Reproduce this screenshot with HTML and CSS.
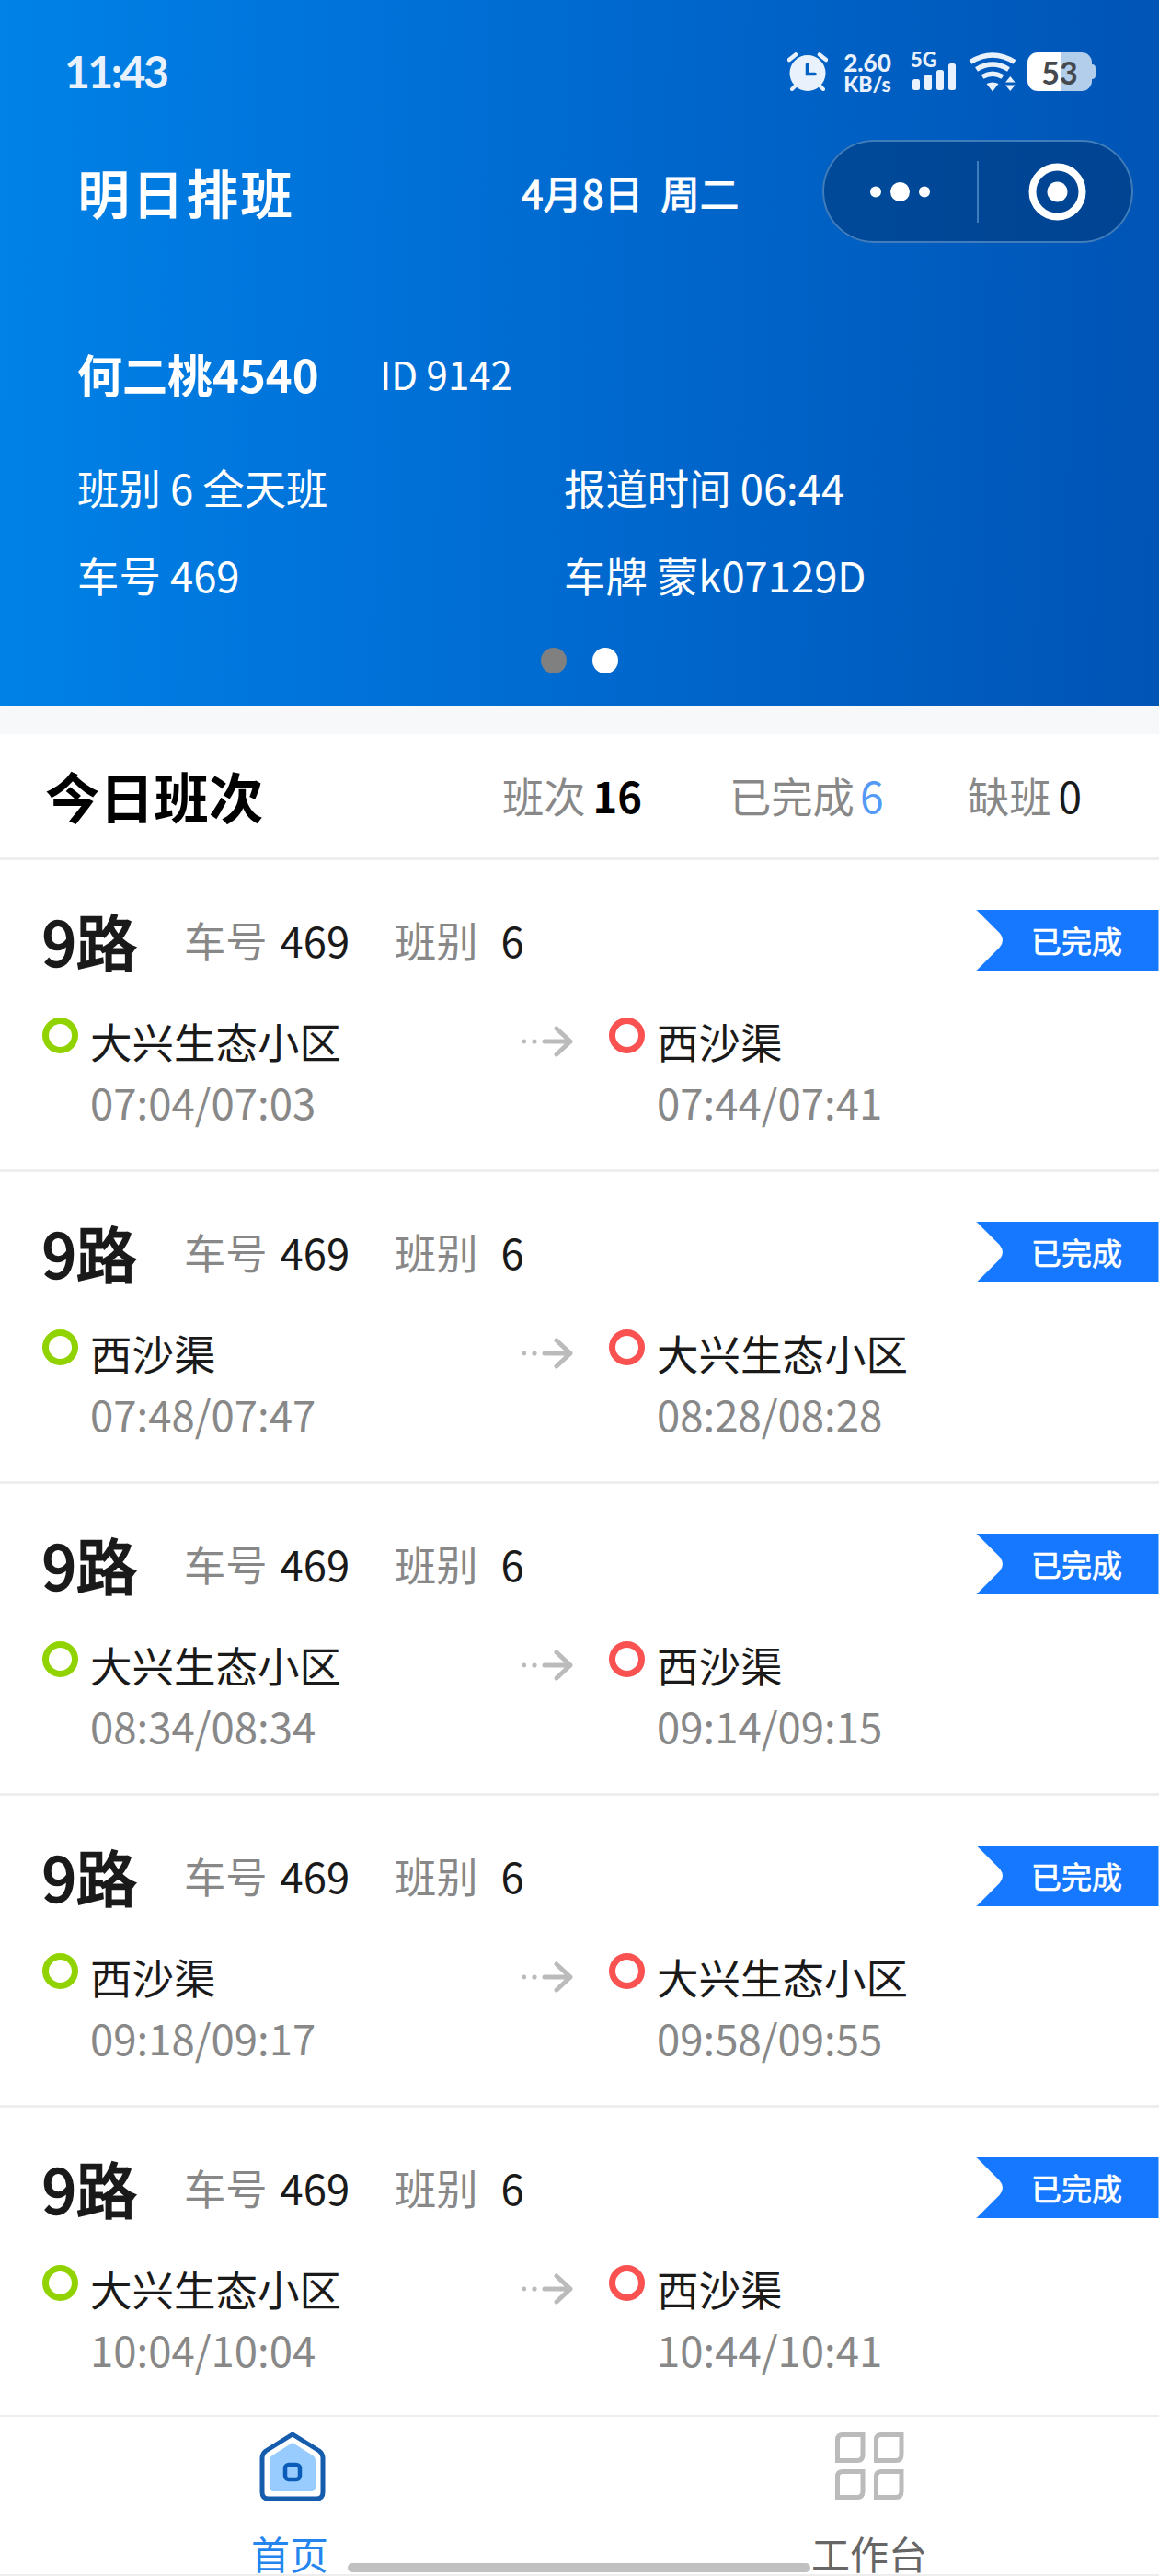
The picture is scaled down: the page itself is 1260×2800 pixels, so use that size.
FILE: index.html
```html
<!DOCTYPE html>
<html lang="zh-CN">
<head>
    <meta charset="UTF-8">
    <meta name="viewport" content="width=device-width, initial-scale=1.0">
    <title>今日班次</title>
    <link rel="stylesheet" href="styles.css">
</head>
<body>
    <!-- shared icons -->
    <svg class="sprite" width="0" height="0">
        <symbol id="arrow" viewBox="0 0 56 36">
            <circle cx="2.8" cy="18" r="2.4" fill="#bbb"/>
            <circle cx="14" cy="18" r="2.6" fill="#bbb"/>
            <path d="M25 18H53M38 4L53 18L38 32" fill="none" stroke="#bbb" stroke-width="5" stroke-linecap="round" stroke-linejoin="round"/>
        </symbol>
        <symbol id="flag" viewBox="0 0 198 66">
            <path d="M0 0H198V66H0L25 41Q32 33 25 25Z" fill="#1677ff"/>
        </symbol>
    </svg>

    <div class="page">
    <div class="hero">
        <div class="status">
            <span class="clock">11:43</span>
            <svg class="alarm" width="44" height="42" viewBox="0 0 44 42">
                <circle cx="22" cy="22.500" r="19.500" fill="#e9f2fc"/>
                <path d="M2 8L9 2.500M42 8L35 2.500" stroke="#e9f2fc" stroke-width="4.500" stroke-linecap="round"/>
                <path d="M5 40L10 35M39 40L34 35" stroke="#e9f2fc" stroke-width="4" stroke-linecap="round"/>
                <path d="M21.500 13V23.500H30" fill="none" stroke="#0061c4" stroke-width="3.500" stroke-linecap="round"/>
            </svg>
            <div class="speed"><b>2.60</b><b class="unit">KB/s</b></div>
            <div class="signal">
                <b>5G</b>
                <svg width="48" height="30" viewBox="0 0 48 30" fill="#e9f2fc">
                    <rect x="0" y="17" width="8" height="12" rx="2.500"/>
                    <rect x="13" y="12" width="8" height="17" rx="2.500"/>
                    <rect x="26" y="7" width="8" height="22" rx="2.500"/>
                    <rect x="39" y="0" width="8" height="29" rx="2.500"/>
                </svg>
            </div>
            <svg class="wifi" width="52" height="43" viewBox="0 0 52 43" fill="none" stroke="#e9f2fc" stroke-width="5.500">
                <path d="M2 10.500Q26 -4.500 50 10.500"/>
                <path d="M8.500 18.500Q26 7.500 43.500 18.500"/>
                <path d="M15 26.500Q26 20 37 26.500"/>
                <path d="M19.500 34Q26 31 32.500 34L26 42.500Z" fill="#e9f2fc" stroke="none"/>
                <path d="M40 32.500L45.300 26L50.600 32.500ZM40 35.500L45.300 42L50.600 35.500Z" fill="#e9f2fc" stroke="none"/>
            </svg>
            <div class="battery"><span>53</span></div>
        </div>

        <div class="nav">
            <h1>明日排班</h1>
            <span class="date">4月8日&nbsp; 周二</span>
            <div class="capsule">
                <svg width="338" height="112" viewBox="0 0 338 112" fill="#fff">
                    <circle cx="58" cy="56.500" r="6"/>
                    <circle cx="84.500" cy="56.500" r="10.500"/>
                    <circle cx="111" cy="56.500" r="6"/>
                    <path d="M169 23V90" stroke="#3f7dbd" stroke-width="2"/>
                    <circle cx="255.500" cy="56.500" r="27" fill="none" stroke="#fff" stroke-width="8"/>
                    <circle cx="255.500" cy="56.500" r="11"/>
                </svg>
            </div>
        </div>

        <div class="driver">
            <div class="who"><span class="name">何二桃4540</span><span class="uid">ID 9142</span></div>
            <div class="info">
                <p>班别 6 全天班</p>
                <p>报道时间 06:44</p>
                <p>车号 469</p>
                <p>车牌 蒙k07129D</p>
            </div>
        </div>
        <div class="dots"><i></i><i class="on"></i></div>
    </div>

    <div class="summary">
        <h2>今日班次</h2>
        <p class="total">班次<b>16</b></p>
        <p class="done">已完成<span>6</span></p>
        <p class="miss">缺班<span>0</span></p>
    </div>

    <div class="list">
        <div class="trip">
            <div class="top">
                <h3>9路</h3>
                <p class="bus">车号<span>469</span></p>
                <p class="shift">班别<span>6</span></p>
                <div class="flag"><svg><use href="#flag"/></svg><span>已完成</span></div>
            </div>
            <div class="route">
                <div class="stop"><i class="ring"></i><div><p>大兴生态小区</p><p class="time">07:04/07:03</p></div></div>
                <svg class="arrow"><use href="#arrow"/></svg>
                <div class="stop"><i class="ring end"></i><div><p>西沙渠</p><p class="time">07:44/07:41</p></div></div>
            </div>
        </div>

        <div class="trip">
            <div class="top">
                <h3>9路</h3>
                <p class="bus">车号<span>469</span></p>
                <p class="shift">班别<span>6</span></p>
                <div class="flag"><svg><use href="#flag"/></svg><span>已完成</span></div>
            </div>
            <div class="route">
                <div class="stop"><i class="ring"></i><div><p>西沙渠</p><p class="time">07:48/07:47</p></div></div>
                <svg class="arrow"><use href="#arrow"/></svg>
                <div class="stop"><i class="ring end"></i><div><p>大兴生态小区</p><p class="time">08:28/08:28</p></div></div>
            </div>
        </div>

        <div class="trip">
            <div class="top">
                <h3>9路</h3>
                <p class="bus">车号<span>469</span></p>
                <p class="shift">班别<span>6</span></p>
                <div class="flag"><svg><use href="#flag"/></svg><span>已完成</span></div>
            </div>
            <div class="route">
                <div class="stop"><i class="ring"></i><div><p>大兴生态小区</p><p class="time">08:34/08:34</p></div></div>
                <svg class="arrow"><use href="#arrow"/></svg>
                <div class="stop"><i class="ring end"></i><div><p>西沙渠</p><p class="time">09:14/09:15</p></div></div>
            </div>
        </div>

        <div class="trip">
            <div class="top">
                <h3>9路</h3>
                <p class="bus">车号<span>469</span></p>
                <p class="shift">班别<span>6</span></p>
                <div class="flag"><svg><use href="#flag"/></svg><span>已完成</span></div>
            </div>
            <div class="route">
                <div class="stop"><i class="ring"></i><div><p>西沙渠</p><p class="time">09:18/09:17</p></div></div>
                <svg class="arrow"><use href="#arrow"/></svg>
                <div class="stop"><i class="ring end"></i><div><p>大兴生态小区</p><p class="time">09:58/09:55</p></div></div>
            </div>
        </div>

        <div class="trip">
            <div class="top">
                <h3>9路</h3>
                <p class="bus">车号<span>469</span></p>
                <p class="shift">班别<span>6</span></p>
                <div class="flag"><svg><use href="#flag"/></svg><span>已完成</span></div>
            </div>
            <div class="route">
                <div class="stop"><i class="ring"></i><div><p>大兴生态小区</p><p class="time">10:04/10:04</p></div></div>
                <svg class="arrow"><use href="#arrow"/></svg>
                <div class="stop"><i class="ring end"></i><div><p>西沙渠</p><p class="time">10:44/10:41</p></div></div>
            </div>
        </div>
    </div>

    <div class="tabbar">
        <div class="tab active">
            <svg width="76" height="78" viewBox="0 0 76 78">
                <path d="M38 3L67 21Q71 24 71 29V66Q71 73 64 73H12Q5 73 5 66V29Q5 24 9 21Z" fill="#fff" stroke="#155cad" stroke-width="5" stroke-linejoin="round"/>
                <path d="M38 12L60 26Q63 28 63 32V60Q63 65 58 65H18Q13 65 13 60V32Q13 28 16 26Z" fill="#98ccff"/>
                <rect x="30" y="36" width="16" height="16" rx="4" fill="#98ccff" stroke="#0b5cb8" stroke-width="4.500"/>
            </svg>
            <span>首页</span>
        </div>
        <div class="tab">
            <svg width="76" height="78" viewBox="0 0 76 78" fill="none" stroke="#bbb" stroke-width="5">
                <path d="M3.500 31.500V9Q3.500 3.500 9 3.500H31V25Q31 31.500 25 31.500Z"/>
                <path d="M45.500 31.500V9Q45.500 3.500 51 3.500H73V25Q73 31.500 67 31.500Z"/>
                <path d="M3.500 71.500V49Q3.500 43.500 9 43.500H31V65Q31 71.500 25 71.500Z"/>
                <path d="M45.500 71.500V49Q45.500 43.500 51 43.500H73V65Q73 71.500 67 71.500Z"/>
            </svg>
            <span>工作台</span>
        </div>
        <div class="homebar"></div>
    </div>
    </div>
</body>
</html>
```
FILE: styles.css
```css
*{
margin: 0;
padding: 0;
box-sizing: border-box;
font-family: "Noto Sans CJK SC", sans-serif;
}

body{
    background-color: #fff;
    color: #1a1a1a;
}

.sprite{
    position: absolute;
}

.page{
    width: 1260px;
    height: 2800px;
    overflow: hidden;
    display: flex;
    flex-direction: column;
}

svg{
    display: block;
    flex: none;
}

/* blue header */
.hero{
    height: 767px;
    flex: none;
    color: #fff;
    background: linear-gradient(91deg, #0082e6 0%, #0075dc 25%, #0063c8 65%, #0054b5 100%);
}

.status{
    height: 152px;
    padding: 57px 70px 0 70px;
    display: flex;
    align-items: flex-start;
    color: #e9f2fc;
}

.clock, .speed b, .signal b, .battery span{
    font-family: Lato, sans-serif;
    font-weight: 700;
}

.clock{
    width: 786px;
    font-size: 48px;
    line-height: 42px;
    letter-spacing: -2.500px;
}

.speed{
    width: 64px;
    margin-left: 11px;
    margin-right: 1px;
    font-size: 26px;
    line-height: 22px;
    text-align: center;
}

.speed b{
    display: block;
    font-weight: 900;
}

.speed .unit{
    font-size: 23px;
    line-height: 24px;
}

.signal{
    position: relative;
    width: 49px;
    margin-left: 16px;
    padding-top: 12px;
}

.signal b{
    position: absolute;
    left: -2px;
    top: -4px;
    font-size: 22px;
    font-weight: 900;
    line-height: 23px;
}

.wifi{
    margin-left: 12px;
}

.battery{
    position: relative;
    width: 70px;
    height: 42px;
    margin-left: 12px;
    border-radius: 11px;
    background: linear-gradient(90deg, #fff 53%, #b2ceeb 53%);
    color: #45484d;
    font-size: 34px;
    line-height: 42px;
    text-align: center;
}

.battery::after{
    content: "";
    position: absolute;
    right: -4px;
    top: 13px;
    width: 4px;
    height: 16px;
    border-radius: 0 4px 4px 0;
    background: #b2ceeb;
}

.nav{
    display: flex;
    align-items: center;
    height: 112px;
    padding: 0 28px 0 85px;
}

.nav h1{
    width: 482px;
    font-size: 55.500px;
    font-weight: 400;
    letter-spacing: 3.500px;
    -webkit-text-stroke: 2px #fff;
}

.date{
    width: 327px;
    font-size: 42.500px;
    -webkit-text-stroke: 1px #fff;
}

.capsule{
    width: 338px;
    height: 112px;
    border-radius: 56px;
    background: rgba(0, 50, 110, 0.500);
    box-shadow: inset 0 0 0 2px #3f7dbd;
}

.driver{
    height: 437px;
    padding: 105px 84px 0;
}

.who{
    display: flex;
    align-items: center;
    height: 72px;
}

.name{
    width: 329px;
    font-size: 49px;
    font-weight: 700;
}

.uid{
    font-size: 42px;
}

.info{
    display: grid;
    grid-template-columns: 529px 1fr;
    grid-auto-rows: 95px;
    margin-top: 41px;
    font-size: 45.400px;
    line-height: 95px;
}

.dots{
    display: flex;
    justify-content: center;
    gap: 28px;
    padding-top: 3px;
}

.dots i{
    width: 28px;
    height: 28px;
    border-radius: 50%;
    background: #808080;
}

.dots .on{
    background: #fff;
}

/* today summary */
.summary{
    display: flex;
    align-items: center;
    flex: none;
    height: 168px;
    padding: 0 0 1px 49px;
    border-top: 31px solid #f7f8fa;
    border-bottom: 4px solid #eee;
    font-size: 45.300px;
    color: #888;
}

.summary h2{
    width: 497px;
    font-size: 59.300px;
    font-weight: 700;
    color: #000;
}

.summary span, .summary b{
    margin-left: 8px;
    font-size: 46px;
    color: #1a1a1a;
}

.summary b{
    font-size: 45.300px;
    color: #000;
}

.summary .done span{
    margin-left: 6px;
    color: #5399f5;
}

.total{
    width: 247px;
}

.done{
    width: 259px;
}

/* trip list */
.list{
    flex: 1;
    overflow: hidden;
}

.trip{
    height: 339px;
    padding-top: 53px;
    border-bottom: 3px solid #eee;
}

.top{
    display: flex;
    align-items: center;
    height: 66px;
    padding-left: 46px;
    font-size: 45.300px;
    color: #888;
}

.top h3{
    width: 154px;
    font-size: 66px;
    font-weight: 400;
    color: #1a1a1a;
    -webkit-text-stroke: 2.400px #1a1a1a;
}

.top p span{
    color: #1a1a1a;
}

.bus{
    width: 229px;
}

.bus span{
    margin-left: 14px;
}

.shift span{
    margin-left: 25px;
}

.flag{
    position: relative;
    width: 199px;
    height: 66px;
    margin: 2px 0 0 auto;
    padding-left: 60px;
    font-size: 33px;
    line-height: 66px;
    color: #fff;
    -webkit-text-stroke: 0.700px #fff;
}

.flag svg{
    position: absolute;
    left: 0;
    top: 0;
    width: 199px;
    height: 66px;
}

.flag span{
    position: relative;
}

.route{
    display: flex;
    padding: 52px 0 0 46px;
}

.stop{
    display: flex;
    width: 521px;
    font-size: 45.500px;
    line-height: 66px;
}

.stop div{
    margin: -8px 0 0 13px;
}

.ring{
    width: 39px;
    height: 39px;
    border: 7px solid #91d300;
    border-radius: 50%;
}

.ring.end{
    border-color: #fa5151;
}

.time{
    color: #888;
}

.arrow{
    width: 56px;
    height: 36px;
    margin: 8px 39px 0 0;
}

/* bottom tabs */
.tabbar{
    position: relative;
    display: flex;
    flex: none;
    height: 175px;
    border-top: 2px solid #eee;
    border-bottom: 2px solid #eee;
}

.tab{
    flex: 1;
    display: flex;
    flex-direction: column;
    align-items: center;
    padding-top: 16px;
    font-size: 42px;
    line-height: 46px;
    color: #666;
}

.tab svg{
    margin-bottom: 31px;
}

.active{
    color: #2585ee;
}

.active svg{
    margin-left: 5px;
}

.homebar{
    position: absolute;
    left: 378px;
    bottom: 2px;
    width: 503px;
    height: 10px;
    border-radius: 5px;
    background: #c1c1c1;
}
```
